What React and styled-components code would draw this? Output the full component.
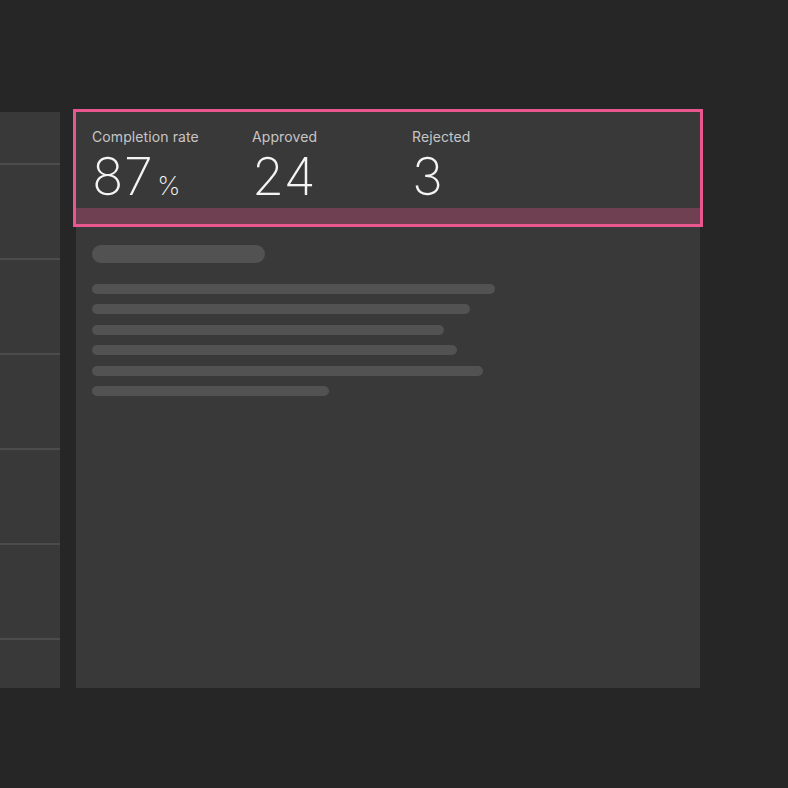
import styled, { createGlobalStyle } from "styled-components";

const GlobalStyle = createGlobalStyle`
  html, body {
    margin: 0;
    padding: 0;
    background: #262626;
  }
  body {
    font-family: "Inter", "Noto Sans", sans-serif;
  }
`;

const Page = styled.div`
  width: 788px;
  height: 788px;
  display: flex;
  gap: 16px;
  padding-top: 112px;
  box-sizing: border-box;
  overflow: hidden;
`;

const SideList = styled.div`
  width: 60px;
  height: 576px;
  background: #393939;
  display: flex;
  flex-direction: column;
`;

const SideRow = styled.div`
  box-sizing: border-box;
  height: ${(p) => p.$h}px;
  border-bottom: ${(p) => (p.$last ? "none" : "2px solid #4c4c4c")};
  flex-shrink: 0;
`;

const Panel = styled.div`
  width: 624px;
  height: 576px;
  background: #393939;
  display: flex;
  flex-direction: column;
`;

const StatsBar = styled.div`
  position: relative;
  display: flex;
  padding: 16px;
  outline: 3px solid #e8588f;

  &::after {
    content: "";
    position: absolute;
    left: 0;
    right: 0;
    bottom: 0;
    height: 16px;
    background: #6f3f52;
  }
`;

const Stat = styled.div`
  width: 160px;
  display: flex;
  flex-direction: column;
`;

const Label = styled.div`
  font-size: 14px;
  line-height: 18px;
  color: #c6c6c6;
  letter-spacing: 0.1px;
`;

const Value = styled.div`
  font-size: 52px;
  font-weight: 200;
  line-height: 62px;
  color: #f4f4f4;
  letter-spacing: 0.5px;
`;

const Unit = styled.span`
  font-size: 26px;
  line-height: 1;
  margin-left: 4px;
`;

const Skeleton = styled.div`
  display: flex;
  flex-direction: column;
  padding: 21px 16px 0;
`;

const SkelTitle = styled.div`
  width: 173px;
  height: 18px;
  border-radius: 9px;
  background: #525252;
  margin-bottom: 21px;
`;

const SkelLine = styled.div`
  height: 10px;
  border-radius: 5px;
  background: #525252;
  margin-bottom: 10.4px;
`;

const stats = [
  { label: "Completion rate", value: "87", unit: "%" },
  { label: "Approved", value: "24" },
  { label: "Rejected", value: "3" },
];

const lines = [403, 378, 352, 365, 391, 237];
const rows = [53, 95, 95, 95, 95, 95, 48];

export default function App() {
  return (
    <>
      <GlobalStyle />
      <Page>
        <SideList>
          {rows.map((h, i) => (
            <SideRow key={i} $h={h} $last={i === rows.length - 1} />
          ))}
        </SideList>
        <Panel>
          <StatsBar>
            {stats.map((s) => (
              <Stat key={s.label}>
                <Label>{s.label}</Label>
                <Value>
                  {s.value}
                  {s.unit && <Unit>{s.unit}</Unit>}
                </Value>
              </Stat>
            ))}
          </StatsBar>
          <Skeleton>
            <SkelTitle />
            {lines.map((w, i) => (
              <SkelLine key={i} style={{ width: w }} />
            ))}
          </Skeleton>
        </Panel>
      </Page>
    </>
  );
}
